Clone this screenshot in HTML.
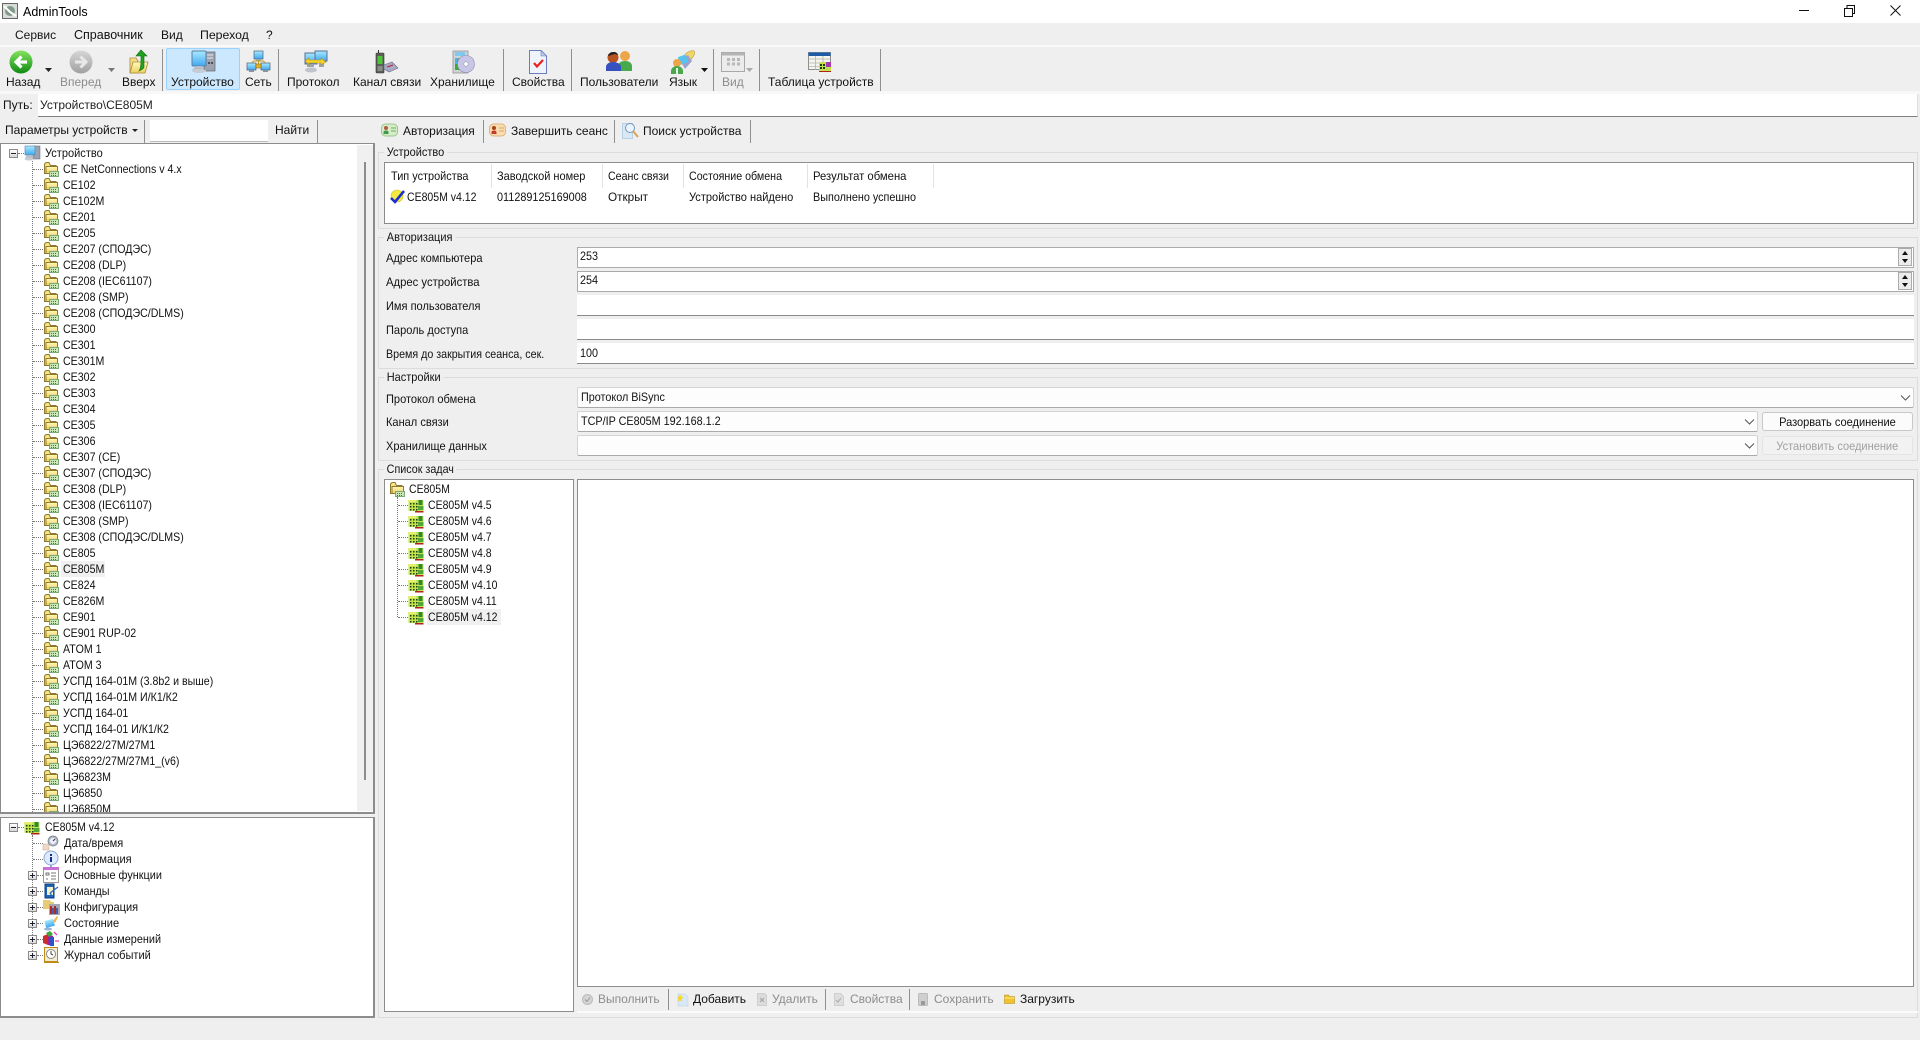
<!DOCTYPE html>
<html lang="ru"><head><meta charset="utf-8"><title>AdminTools</title>
<style>
html,body{margin:0;padding:0;width:1920px;height:1040px;overflow:hidden;background:#efefef}
body{position:relative;font:12px/16px "Liberation Sans","Noto Sans CJK SC",sans-serif;color:#111}
.a{position:absolute}
.t{position:absolute;white-space:nowrap;line-height:16px}
.g{color:#8c8c8c}
.s{position:absolute;width:1px;background:#8f8f8f}
.box{position:absolute;background:#fff;border:1px solid #8c8c8c;box-sizing:border-box}
.gp{position:absolute;box-sizing:border-box;border:1px solid #dcdcdc}
.lg{position:absolute;background:#efefef;padding:0 3px;white-space:nowrap;line-height:16px;transform:scaleX(.915);transform-origin:0 50%}
.n{transform:scaleX(.92);transform-origin:0 50%}
.m{transform:scaleX(.875);transform-origin:0 50%}
.i{display:inline-block;white-space:nowrap;transform:scaleX(.9);transform-origin:0 50%}
.in{position:absolute;background:#fff;box-sizing:border-box;border-bottom:1px solid #8a8a8a;line-height:20px;padding-left:3px}
.in2{position:absolute;background:#fff;box-sizing:border-box;border:1px solid #ababab;line-height:17px;padding-left:1px}
.cb{position:absolute;background:#fdfdfd;box-sizing:border-box;border:1px solid #d4d4d4;border-bottom-color:#aaa;border-radius:2px;line-height:19px;padding-left:3px}
.btn{position:absolute;box-sizing:border-box;border:1px solid #c8c8c8;border-radius:3px;background:#fbfbfb;text-align:center;line-height:18px}
.btn span{display:inline-block;white-space:nowrap;transform:scaleX(.92)}
.r{position:relative;height:16px;line-height:16px;white-space:nowrap}
.r svg{position:absolute;left:43px;top:0;width:16px;height:16px}
.r span{position:absolute;left:63px;top:0;transform:scaleX(.885);transform-origin:0 50%}
.r::before{content:"";position:absolute;left:33px;top:8px;width:10px;border-top:1px dotted #777}
.v{position:absolute;width:0;border-left:1px dotted #777}
.pm{position:absolute;width:9px;height:9px;box-sizing:border-box;border:1px solid #8a8a8a;background:linear-gradient(#fff,#d8d8d8)}
.pm::before{content:"";position:absolute;left:1px;top:3px;width:5px;height:1px;background:#223}
.pm.p::after{content:"";position:absolute;left:3px;top:1px;width:1px;height:5px;background:#223}
.sep{position:absolute;top:164px;height:24px;width:1px;background:#e3e3e3}
.sp{position:absolute;left:1898px;width:14px;height:18px;box-sizing:border-box;border:1px solid #aaa;background:#ececec}
.sp::before{content:"";position:absolute;left:3px;top:2px;border:3px solid transparent;border-top:0;border-bottom:4px solid #111}
.sp::after{content:"";position:absolute;left:3px;bottom:2px;border:3px solid transparent;border-bottom:0;border-top:4px solid #111}
.chev{position:absolute;width:11px;height:6px}
svg{display:block}
.ic{position:absolute;overflow:visible}
</style></head><body>

<svg width="0" height="0" style="position:absolute">
<defs>
<linearGradient id="yl" x1="0" y1="0" x2="0" y2="1"><stop offset="0" stop-color="#fff8c0"/><stop offset="1" stop-color="#f0cf5c"/></linearGradient>
<linearGradient id="gn" x1="0" y1="0" x2="0" y2="1"><stop offset="0" stop-color="#86e45e"/><stop offset="1" stop-color="#0f8a12"/></linearGradient>
<linearGradient id="gr" x1="0" y1="0" x2="0" y2="1"><stop offset="0" stop-color="#d6d6d6"/><stop offset="1" stop-color="#a0a0a0"/></linearGradient>
<linearGradient id="bl" x1="0" y1="0" x2="0" y2="1"><stop offset="0" stop-color="#a8eaff"/><stop offset="1" stop-color="#3fa8f0"/></linearGradient>
<symbol id="f" viewBox="0 0 16 16">
<path d="M1.500 3V12.500H13V4.500H7.500L6 1.500H3z" fill="#f7e38a" stroke="#8f7a2c"/>
<path d="M3 5.500H14.500V12.500H3z" fill="url(#yl)" stroke="#8f7a2c"/>
<rect x="6.500" y="10.500" width="9" height="5" fill="#c8e8b8" stroke="#7fa878"/>
<path d="M8 12h1v1H8zM10 12h1v1h-1zM12 12h1v1h-1zM8 14h1v1H8zM10 14h1v1h-1zM12 14h1v1h-1z" fill="#3b7a3a"/>
</symbol>
<symbol id="c" viewBox="0 0 16 16">
<rect x="0.500" y="3" width="15" height="11" fill="#c4e44e"/>
<path d="M0 3h8v2H0z" fill="#e6ee70"/>
<path d="M2 6h1.500v1.500H2zM5 6h1.500v1.500H5zM2 9h1.500v1.500H2zM5 9h1.500v1.500H5zM2 12h1.500v1.500H2zM5 12h1.500v1.500H5zM8 6h1.500v1.500H8zM8 9h1.500v1.500H8zM8 12h1.500v1.500H8z" fill="#1b3d12"/>
<path d="M10.500 3h4v5h-4z" fill="#2e8a2e"/><path d="M10 9h5.500v4H10z" fill="#4fa838"/>
<path d="M7 14h8.500v1.500H7z" fill="#b42020"/>
</symbol>
</defs></svg>

<!-- Title bar -->
<div class="a" style="left:0;top:0;width:1920px;height:23px;background:#fff"></div>
<svg class="ic" style="left:2px;top:3px" width="16" height="16" viewBox="0 0 16 16"><rect x=".5" y=".5" width="15" height="15" fill="#d8dcd8" stroke="#666"/><circle cx="8" cy="8" r="5" fill="#7f9a88"/><path d="M2 3l6 6 6 4" stroke="#fff" stroke-width="2" fill="none"/></svg>
<div class="t" style="left:23px;top:4px;font-size:12.5px;color:#000">AdminTools</div>
<svg class="ic" style="left:1799px;top:5px" width="12" height="12"><path d="M0 5.500H10" stroke="#111"/></svg>
<svg class="ic" style="left:1844px;top:5px" width="12" height="12"><path d="M.5 3.500H8.500V11.500H.5zM3 3V.5H10.500V8.500H9" stroke="#111" fill="none"/></svg>
<svg class="ic" style="left:1890px;top:5px" width="12" height="12"><path d="M.5.5L10.500 10.500M10.500.5L.5 10.500" stroke="#111" fill="none"/></svg>

<!-- Menu -->
<div class="a" style="left:0;top:23px;width:1920px;height:22px;background:#efefef"></div>
<div class="t" style="left:15px;top:27px">Сервис</div>
<div class="t" style="left:74px;top:27px;font-size:12.500px">Справочник</div>
<div class="t" style="left:161px;top:27px">Вид</div>
<div class="t" style="left:200px;top:27px;font-size:12.300px">Переход</div>
<div class="t" style="left:266px;top:27px">?</div>

<!-- Toolbar -->
<div class="a" style="left:0;top:45px;width:1920px;height:2px;background:#fafafa"></div>
<div class="a" style="left:0;top:91px;width:1920px;height:3px;background:#f8f8f8"></div>
<div class="s" style="left:162px;top:49px;height:42px"></div>
<div class="s" style="left:278px;top:49px;height:42px"></div>
<div class="s" style="left:503px;top:49px;height:42px"></div>
<div class="s" style="left:571px;top:49px;height:42px"></div>
<div class="s" style="left:713px;top:49px;height:42px"></div>
<div class="s" style="left:759px;top:49px;height:42px"></div>
<div class="s" style="left:880px;top:49px;height:42px"></div>
<div class="a" style="left:166px;top:48px;width:74px;height:42px;box-sizing:border-box;background:#cce8ff;border:1px solid #99d1ff;border-radius:2px"></div>

<svg class="ic" style="left:9px;top:50px" width="24" height="24" viewBox="0 0 24 24"><circle cx="12" cy="12" r="11.500" fill="url(#gn)"/><path d="M12.500 6.500L7 12l5.500 5.500M7.500 12H18" stroke="#fff" stroke-width="3.200" fill="none"/></svg>
<svg class="ic" style="left:69px;top:50px" width="24" height="24" viewBox="0 0 24 24"><circle cx="12" cy="12" r="11.500" fill="url(#gr)"/><path d="M11.500 6.500L17 12l-5.500 5.500M16.500 12H6" stroke="#e8e8e8" stroke-width="3" fill="none"/></svg>
<svg class="ic" style="left:129px;top:50px" width="20" height="24" viewBox="0 0 20 24"><path d="M1 8h6l2 3v12H1z" fill="#f2dc88" stroke="#a78c3a" stroke-width=".8"/><path d="M4 12h15l-3 11H1z" fill="url(#yl)" stroke="#a78c3a" stroke-width=".8"/><path d="M12 0l6 6h-3v11c0 2-3 3-5 4 2-3 2-8 2-15H7z" fill="#22a022" stroke="#0d6f12" stroke-width=".6"/></svg>
<svg class="ic" style="left:191px;top:50px" width="25" height="24" viewBox="0 0 25 24"><rect x="13" y="2" width="11" height="19" fill="#9da3ae" stroke="#5f6470" stroke-width=".7"/><path d="M16 5h6M16 8h6" stroke="#e5e7ec"/><path d="M17 12h2v2h-2zM20 12h2v2h-2z" fill="#4a4f5c"/><rect x="1" y="1" width="14" height="15" rx="1" fill="url(#bl)" stroke="#5b7fa6"/><path d="M5 16h6l2 4H1z" fill="#b7bdc7"/><ellipse cx="8" cy="21" rx="7" ry="2" fill="#c7cbd3"/></svg>
<svg class="ic" style="left:246px;top:50px" width="25" height="24" viewBox="0 0 25 24"><rect x="8" y="1" width="9" height="8" fill="url(#bl)" stroke="#4e5f78" stroke-width=".7"/><rect x="10" y="9" width="5" height="2" fill="#9aa"/><rect x="1" y="13" width="9" height="7" fill="url(#bl)" stroke="#4e5f78" stroke-width=".7"/><rect x="15" y="13" width="9" height="7" fill="url(#bl)" stroke="#4e5f78" stroke-width=".7"/><path d="M3 21h5M17 21h5" stroke="#8b93a0" stroke-width="2"/><path d="M12.500 11v4M5 13l3-2h9l3 2" stroke="#c79a18" fill="none"/><rect x="10" y="14" width="5" height="4" fill="#e2b32c" stroke="#7a5f12" stroke-width=".5"/></svg>
<svg class="ic" style="left:304px;top:50px" width="24" height="24" viewBox="0 0 24 24"><rect x="1" y="3" width="12" height="11" fill="url(#bl)" stroke="#5b6f96"/><rect x="11" y="1" width="12" height="10" fill="url(#bl)" stroke="#5b6f96"/><path d="M3 14h7v3H3z" fill="#9aa4b2"/><ellipse cx="7" cy="20" rx="6" ry="2.500" fill="#bfc4cc"/><rect x="15" y="11" width="5" height="6" fill="#9aa4b2"/><path d="M1 11l4-3v2h12V8l5 4-5 3v-2H5v2z" fill="#f5d22a" stroke="#b48e10" stroke-width=".6"/></svg>
<svg class="ic" style="left:374px;top:50px" width="24" height="24" viewBox="0 0 24 24"><rect x="2" y="3" width="8" height="20" rx="1" fill="#5b5f58" stroke="#333" stroke-width=".6"/><rect x="3.500" y="6" width="5" height="8" fill="#4fc43a"/><path d="M4 0h1v3H4z" fill="#333"/><path d="M3.500 16h5v5h-5z" fill="#8a8d88"/><path d="M10 15l8-3 6 6-9 4-5-3z" fill="#a8abc4" stroke="#656884" stroke-width=".6"/><path d="M13 17l6-2" stroke="#b42030"/></svg>
<svg class="ic" style="left:452px;top:50px" width="23" height="24" viewBox="0 0 23 24"><rect x="1" y="1" width="15" height="22" fill="#cfd3d6" stroke="#85898c" stroke-width=".7"/><rect x="3" y="2" width="10" height="4" fill="#7fc8f0"/><path d="M3 8h5v6H3z" fill="#49b5e6"/><path d="M3 14h5v6H3z" fill="#3fa83a"/><path d="M5 9h3v4H5z" fill="#e56b2a"/><circle cx="14" cy="14" r="8.500" fill="#c8c6e6" stroke="#8f8fb0" stroke-width=".6"/><circle cx="14" cy="14" r="2.200" fill="#fff" stroke="#888" stroke-width=".5"/></svg>
<svg class="ic" style="left:529px;top:50px" width="18" height="24" viewBox="0 0 18 24"><path d="M.5.5H12l5.500 5.500V23.500H.5z" fill="#eef3fc" stroke="#6a7dbc"/><path d="M12 .5V6h5.500z" fill="#b9c8ec" stroke="#6a7dbc" stroke-width=".6"/><path d="M5 13l3 3.500 6-6.500" stroke="#e52420" stroke-width="2.200" fill="none"/></svg>
<svg class="ic" style="left:606px;top:50px" width="26" height="22" viewBox="0 0 26 22"><circle cx="19" cy="6" r="5" fill="#eca548"/><path d="M12 21v-5c0-3 3-5 7-5s7 2 7 5v5z" fill="#47a84c"/><circle cx="7" cy="7.500" r="5.500" fill="#b8521f"/><path d="M2 6c0-4 9-6 10-1l-3-1z" fill="#222"/><path d="M0 21v-4c0-3 3-5 7-5s8 2 8 5v4z" fill="#3752c0"/></svg>
<svg class="ic" style="left:671px;top:49px" width="25" height="25" viewBox="0 0 25 25"><path d="M13 7c2-4 8-6 10-5 2 2-1 7-4 9z" fill="#f2d56a" stroke="#b99b36" stroke-width=".6"/><path d="M8 10l9-4 4 6-7 8z" fill="#9aa3ce"/><rect x="8" y="7" width="8" height="8" fill="#55c4ee" transform="rotate(-20 11 11)"/><circle cx="6" cy="14" r="4" fill="#eda64a"/><path d="M0 25v-3c0-3 3-5 6-5s6 2 6 5v3z" fill="#4aa84c"/><path d="M5 19h2v6H5z" fill="#e6f2e6"/></svg>
<svg class="ic" style="left:721px;top:52px" width="24" height="20" viewBox="0 0 24 20"><rect x=".5" y=".5" width="23" height="19" fill="#ececec" stroke="#a8a8a8"/><rect x=".5" y=".5" width="23" height="3" fill="#b4b4b4"/><path d="M6 6h3v3H6zM11 6h3v3h-3zM16 6h3v3h-3zM6 10.500h3v3H6zM11 10.500h3v3h-3zM16 10.500h3v3h-3z" fill="#b8b8b8"/></svg>
<svg class="ic" style="left:808px;top:52px" width="24" height="22" viewBox="0 0 24 22"><rect x=".5" y=".5" width="22" height="17" fill="#f4f4f0" stroke="#8c8c8c"/><rect x=".5" y=".5" width="22" height="3.500" fill="#1f5aa6"/><path d="M.5 7H22M.5 11H22M.5 14.500H22M7.500 4v14M15 4v14" stroke="#b4b4a8" stroke-width=".8"/><rect x="11" y="10" width="12" height="10" fill="#c4e44e"/><path d="M12 12h2v2h-2zM15 12h2v2h-2zM12 15h2v2h-2zM15 15h2v2h-2z" fill="#1b3d12"/><path d="M18 10h5v5h-5z" fill="#a83ab0"/><path d="M11 19.500h12" stroke="#b42020"/></svg>

<svg class="ic" style="left:45px;top:68px" width="8" height="5"><path d="M0 0h7L3.500 4z" fill="#222"/></svg>
<svg class="ic" style="left:108px;top:68px" width="8" height="5"><path d="M0 0h7L3.500 4z" fill="#777"/></svg>
<svg class="ic" style="left:701px;top:68px" width="8" height="5"><path d="M0 0h7L3.500 4z" fill="#111"/></svg>
<svg class="ic" style="left:746px;top:68px" width="8" height="5"><path d="M0 0h7L3.500 4z" fill="#aaa"/></svg>

<div class="t" style="left:6px;top:74px">Назад</div>
<div class="t g" style="left:60px;top:74px">Вперед</div>
<div class="t" style="left:122px;top:74px">Вверх</div>
<div class="t" style="left:171px;top:74px">Устройство</div>
<div class="t" style="left:245px;top:74px">Сеть</div>
<div class="t" style="left:287px;top:74px">Протокол</div>
<div class="t" style="left:353px;top:74px">Канал связи</div>
<div class="t" style="left:430px;top:74px">Хранилище</div>
<div class="t" style="left:512px;top:74px">Свойства</div>
<div class="t" style="left:580px;top:74px">Пользователи</div>
<div class="t" style="left:669px;top:74px">Язык</div>
<div class="t g" style="left:722px;top:74px">Вид</div>
<div class="t" style="left:768px;top:74px">Таблица устройств</div>

<!-- Path -->
<div class="t" style="left:3px;top:97px">Путь:</div>
<div class="a" style="left:38px;top:94px;width:1880px;height:23px;box-sizing:border-box;background:#fff;border-bottom:1px solid #808080;border-right:1px solid #ddd"></div>
<div class="t" style="left:40px;top:97px;color:#222">Устройство\CE805M</div>

<!-- Search row -->
<div class="t" style="left:5px;top:122px">Параметры устройств</div>
<svg class="ic" style="left:132px;top:129px" width="7" height="4"><path d="M0 0h6L3 3z" fill="#222"/></svg>
<div class="s" style="left:144px;top:120px;height:23px"></div>
<div class="a" style="left:150px;top:120px;width:118px;height:21px;background:#fff;border-bottom:1px solid #bbb"></div>
<div class="t" style="left:275px;top:122px">Найти</div>
<div class="s" style="left:317px;top:120px;height:23px"></div>
<svg class="ic" style="left:381px;top:122px" width="17" height="16" viewBox="0 0 17 16"><rect x=".5" y="2" width="16" height="12" rx="4" fill="#d6ecc6" stroke="#9cc58e"/><circle cx="5" cy="6" r="2" fill="#b45a3a"/><path d="M2.500 12V10c0-1 1-1.500 2.500-1.500S7.500 9 7.500 10v2z" fill="#3d9a4a"/><path d="M10 6h5M10 9h5" stroke="#68b25c"/></svg>
<div class="t" style="left:403px;top:123px">Авторизация</div>
<div class="s" style="left:483px;top:120px;height:23px"></div>
<svg class="ic" style="left:489px;top:122px" width="17" height="16" viewBox="0 0 17 16"><rect x=".5" y="2" width="16" height="12" rx="4" fill="#f8ddb0" stroke="#e0b27c"/><circle cx="5" cy="6" r="2" fill="#a8421e"/><path d="M2.500 12V10c0-1 1-1.500 2.500-1.500S7.500 9 7.500 10v2z" fill="#c83a2a"/><path d="M10 6h5M10 9h5" stroke="#e0a868"/></svg>
<div class="t" style="left:511px;top:123px">Завершить сеанс</div>
<div class="s" style="left:614px;top:120px;height:23px"></div>
<svg class="ic" style="left:622px;top:122px" width="17" height="17" viewBox="0 0 17 17"><path d="M.5 1.500h10v15H.5z" fill="#d8e8f6" stroke="#b8cee2"/><circle cx="8" cy="6" r="4.500" fill="#eaf4ff" stroke="#7a94b8"/><path d="M11 9l5 6" stroke="#d6a458" stroke-width="2"/></svg>
<div class="t" style="left:643px;top:123px">Поиск устройства</div>
<div class="s" style="left:750px;top:120px;height:23px"></div>

<!-- Device tree -->
<div class="box" style="left:0;top:143px;width:375px;height:671px;overflow:hidden;border-width:1px 2px 2px 1px"></div>
<div class="a" style="left:357px;top:145px;width:16px;height:666px;background:#f0f0f0"></div>
<div class="a" style="left:364px;top:162px;width:2px;height:618px;background:#8c8c8c"></div>
<div class="pm" style="left:9px;top:149px"></div>
<div class="a" style="left:18px;top:153px;width:6px;border-top:1px dotted #777"></div>
<svg class="ic" style="left:24px;top:145px" width="16" height="16" viewBox="0 0 16 16"><rect x="9" y="1" width="7" height="13" fill="#9da3ae" stroke="#5f6470" stroke-width=".5"/><rect x="1" y="1" width="10" height="9" fill="url(#bl)" stroke="#5b7fa6" stroke-width=".6"/><path d="M3 10h5l1 3H1z" fill="#b7bdc7"/><ellipse cx="5" cy="14" rx="4.500" ry="1.500" fill="#c7cbd3"/></svg>
<div class="t n" style="left:45px;top:145px">Устройство</div>
<div class="v" style="left:32px;top:161px;height:651px"></div>
<div class="a" style="left:0;top:161px;width:357px;height:651px;overflow:hidden">
<div class="r"><svg><use href="#f"/></svg><span>CE NetConnections v 4.x</span></div>
<div class="r"><svg><use href="#f"/></svg><span>CE102</span></div>
<div class="r"><svg><use href="#f"/></svg><span>CE102M</span></div>
<div class="r"><svg><use href="#f"/></svg><span>CE201</span></div>
<div class="r"><svg><use href="#f"/></svg><span>CE205</span></div>
<div class="r"><svg><use href="#f"/></svg><span>CE207 (СПОДЭС)</span></div>
<div class="r"><svg><use href="#f"/></svg><span>CE208 (DLP)</span></div>
<div class="r"><svg><use href="#f"/></svg><span>CE208 (IEC61107)</span></div>
<div class="r"><svg><use href="#f"/></svg><span>CE208 (SMP)</span></div>
<div class="r"><svg><use href="#f"/></svg><span>CE208 (СПОДЭС/DLMS)</span></div>
<div class="r"><svg><use href="#f"/></svg><span>CE300</span></div>
<div class="r"><svg><use href="#f"/></svg><span>CE301</span></div>
<div class="r"><svg><use href="#f"/></svg><span>CE301M</span></div>
<div class="r"><svg><use href="#f"/></svg><span>CE302</span></div>
<div class="r"><svg><use href="#f"/></svg><span>CE303</span></div>
<div class="r"><svg><use href="#f"/></svg><span>CE304</span></div>
<div class="r"><svg><use href="#f"/></svg><span>CE305</span></div>
<div class="r"><svg><use href="#f"/></svg><span>CE306</span></div>
<div class="r"><svg><use href="#f"/></svg><span>CE307 (CE)</span></div>
<div class="r"><svg><use href="#f"/></svg><span>CE307 (СПОДЭС)</span></div>
<div class="r"><svg><use href="#f"/></svg><span>CE308 (DLP)</span></div>
<div class="r"><svg><use href="#f"/></svg><span>CE308 (IEC61107)</span></div>
<div class="r"><svg><use href="#f"/></svg><span>CE308 (SMP)</span></div>
<div class="r"><svg><use href="#f"/></svg><span>CE308 (СПОДЭС/DLMS)</span></div>
<div class="r"><svg><use href="#f"/></svg><span>CE805</span></div>
<div class="r"><div class="a" style="left:61px;top:0;width:44px;height:16px;background:#f0f0f0"></div><svg><use href="#f"/></svg><span>CE805M</span></div>
<div class="r"><svg><use href="#f"/></svg><span>CE824</span></div>
<div class="r"><svg><use href="#f"/></svg><span>CE826M</span></div>
<div class="r"><svg><use href="#f"/></svg><span>CE901</span></div>
<div class="r"><svg><use href="#f"/></svg><span>CE901 RUP-02</span></div>
<div class="r"><svg><use href="#f"/></svg><span>ATOM 1</span></div>
<div class="r"><svg><use href="#f"/></svg><span>ATOM 3</span></div>
<div class="r"><svg><use href="#f"/></svg><span>УСПД 164-01М (3.8b2 и выше)</span></div>
<div class="r"><svg><use href="#f"/></svg><span>УСПД 164-01М И/К1/К2</span></div>
<div class="r"><svg><use href="#f"/></svg><span>УСПД 164-01</span></div>
<div class="r"><svg><use href="#f"/></svg><span>УСПД 164-01 И/К1/К2</span></div>
<div class="r"><svg><use href="#f"/></svg><span>ЦЭ6822/27М/27М1</span></div>
<div class="r"><svg><use href="#f"/></svg><span>ЦЭ6822/27М/27М1_(v6)</span></div>
<div class="r"><svg><use href="#f"/></svg><span>ЦЭ6823М</span></div>
<div class="r"><svg><use href="#f"/></svg><span>ЦЭ6850</span></div>
<div class="r"><svg><use href="#f"/></svg><span>ЦЭ6850М</span></div>
</div>

<!-- Params tree -->
<div class="box" style="left:0;top:817px;width:375px;height:201px;border-width:1px 2px 2px 1px"></div>
<div class="pm" style="left:9px;top:823px"></div>
<div class="a" style="left:18px;top:827px;width:6px;border-top:1px dotted #777"></div>
<svg class="ic" style="left:24px;top:819px;width:16px;height:16px"><use href="#c"/></svg>
<div class="t m" style="left:45px;top:819px">CE805M v4.12</div>
<div class="v" style="left:32px;top:835px;height:120px"></div>
<div class="a" style="left:33px;top:843px;width:10px;border-top:1px dotted #777"></div>
<div class="a" style="left:33px;top:859px;width:10px;border-top:1px dotted #777"></div>
<div class="a" style="left:37px;top:875px;width:6px;border-top:1px dotted #777"></div>
<div class="a" style="left:37px;top:891px;width:6px;border-top:1px dotted #777"></div>
<div class="a" style="left:37px;top:907px;width:6px;border-top:1px dotted #777"></div>
<div class="a" style="left:37px;top:923px;width:6px;border-top:1px dotted #777"></div>
<div class="a" style="left:37px;top:939px;width:6px;border-top:1px dotted #777"></div>
<div class="a" style="left:37px;top:955px;width:6px;border-top:1px dotted #777"></div>
<div class="pm p" style="left:28px;top:871px"></div>
<div class="pm p" style="left:28px;top:887px"></div>
<div class="pm p" style="left:28px;top:903px"></div>
<div class="pm p" style="left:28px;top:919px"></div>
<div class="pm p" style="left:28px;top:935px"></div>
<div class="pm p" style="left:28px;top:951px"></div>
<svg class="ic" style="left:43px;top:835px" width="17" height="16" viewBox="0 0 17 16"><rect x="0" y="9" width="6" height="6" fill="#f0d8c8" stroke="#c9a894" stroke-width=".5"/><circle cx="10" cy="6" r="5" fill="#b4bcc8" stroke="#6b7484" stroke-width=".7"/><circle cx="10" cy="6" r="3" fill="#eef"/><path d="M10 6l2-2" stroke="#333"/></svg>
<svg class="ic" style="left:43px;top:851px" width="16" height="16" viewBox="0 0 16 16"><circle cx="8" cy="7" r="7" fill="#dfeafc" stroke="#8ea8d4"/><rect x="7" y="6" width="2" height="5" fill="#10308c"/><rect x="7" y="3" width="2" height="2" fill="#10308c"/><path d="M7 14h2v2H7z" fill="#8ea8d4"/></svg>
<svg class="ic" style="left:43px;top:867px" width="16" height="16" viewBox="0 0 16 16"><rect x=".5" y=".5" width="15" height="15" fill="#fff" stroke="#999"/><rect x="0" y="0" width="16" height="3" fill="#c870d8"/><path d="M3 6h3v2H3zM8 6h5M8 9h5M3 12h2M8 12h5" stroke="#777" fill="none"/></svg>
<svg class="ic" style="left:44px;top:883px" width="16" height="16" viewBox="0 0 16 16"><rect x="1" y="1" width="9" height="14" fill="#1f63b4" stroke="#0e3c7c"/><rect x="3" y="4" width="6" height="8" fill="#f4f0c8"/><path d="M6 10l8-6M6 10l2 3" stroke="#2a6cc0" stroke-width="1.300" fill="none"/></svg>
<svg class="ic" style="left:43px;top:899px" width="17" height="16" viewBox="0 0 17 16"><path d="M0 1h7l1 2h3v7H0z" fill="#e8cb76"/><rect x="6" y="5" width="11" height="11" fill="#a4a8b4"/><path d="M8 7v8M12 7v8" stroke="#b02a2a" stroke-width="2"/><path d="M10 9v6M14 9v6" stroke="#2a44a0" stroke-width="1.500"/></svg>
<svg class="ic" style="left:43px;top:915px" width="16" height="16" viewBox="0 0 16 16"><path d="M10 6l4-5 1 1-3 6z" fill="#eab94a"/><rect x="2" y="5" width="9" height="7" fill="url(#bl)" transform="rotate(-15 6 8)"/><ellipse cx="5" cy="14" rx="4" ry="1.500" fill="#98b4d4"/></svg>
<svg class="ic" style="left:43px;top:931px" width="16" height="16" viewBox="0 0 16 16"><path d="M0 5l5-2v11l-5-2z" fill="#d02b2b"/><path d="M5 3l5 2v10l-5-1z" fill="#a32094"/><path d="M3 2l4-2 3 3-4 3z" fill="#3aa83a"/><path d="M7 6h4v9H7z" fill="#2a54c8"/><path d="M11 1l3 3M12 10h4" stroke="#e838c8" stroke-width="1.300"/></svg>
<svg class="ic" style="left:44px;top:947px" width="16" height="16" viewBox="0 0 16 16"><rect x=".5" y=".5" width="13" height="14" fill="#f4eed0" stroke="#c08a18"/><path d="M.5.5V15.500H15" stroke="#c08a18" fill="none"/><circle cx="7" cy="7" r="4.500" fill="#fff" stroke="#888"/><path d="M7 4v3l2 1" stroke="#444" fill="none"/></svg>
<div class="t n" style="left:64px;top:835px">Дата/время</div>
<div class="t n" style="left:64px;top:851px">Информация</div>
<div class="t" style="left:64px;top:867px;transform:scaleX(.905);transform-origin:0 50%">Основные функции</div>
<div class="t" style="left:64px;top:883px;transform:scaleX(.895);transform-origin:0 50%">Команды</div>
<div class="t n" style="left:64px;top:899px">Конфигурация</div>
<div class="t n" style="left:64px;top:915px">Состояние</div>
<div class="t" style="left:64px;top:931px;transform:scaleX(.905);transform-origin:0 50%">Данные измерений</div>
<div class="t n" style="left:64px;top:947px">Журнал событий</div>

<!-- Group: Устройство -->
<div class="gp" style="left:378px;top:152px;width:1540px;height:77px"></div>
<div class="lg" style="left:384px;top:144px">Устройство</div>
<div class="box" style="left:384px;top:162px;width:1530px;height:62px"></div>
<div class="sep" style="left:491px"></div><div class="sep" style="left:602px"></div><div class="sep" style="left:683px"></div><div class="sep" style="left:807px"></div><div class="sep" style="left:933px"></div>
<div class="t" style="left:391px;top:168px;transform:scaleX(.91);transform-origin:0 50%">Тип устройства</div>
<div class="t" style="left:497px;top:168px;transform:scaleX(.915);transform-origin:0 50%">Заводской номер</div>
<div class="t" style="left:608px;top:168px;transform:scaleX(.885);transform-origin:0 50%">Сеанс связи</div>
<div class="t" style="left:689px;top:168px;transform:scaleX(.888);transform-origin:0 50%">Состояние обмена</div>
<div class="t" style="left:813px;top:168px;transform:scaleX(.94);transform-origin:0 50%">Результат обмена</div>
<svg class="ic" style="left:390px;top:189px" width="15" height="15" viewBox="0 0 15 15"><circle cx="7" cy="7" r="6" fill="#f2ea40" stroke="#cfc020" stroke-width=".6"/><path d="M1 9l4 4L14 2" stroke="#1a2fd0" stroke-width="2.600" fill="none"/></svg>
<div class="t m" style="left:407px;top:189px">CE805M v4.12</div>
<div class="t" style="left:497px;top:189px;transform:scaleX(.905);transform-origin:0 50%">011289125169008</div>
<div class="t" style="left:608px;top:189px;transform:scaleX(.98);transform-origin:0 50%">Открыт</div>
<div class="t" style="left:689px;top:189px;transform:scaleX(.922);transform-origin:0 50%">Устройство найдено</div>
<div class="t" style="left:813px;top:189px;transform:scaleX(.9);transform-origin:0 50%">Выполнено успешно</div>

<!-- Group: Авторизация -->
<div class="gp" style="left:378px;top:237px;width:1540px;height:132px"></div>
<div class="lg" style="left:384px;top:229px">Авторизация</div>
<div class="t n" style="left:386px;top:250px">Адрес компьютера</div>
<div class="t" style="left:386px;top:274px;transform:scaleX(.94);transform-origin:0 50%">Адрес устройства</div>
<div class="t n" style="left:386px;top:298px">Имя пользователя</div>
<div class="t n" style="left:386px;top:322px">Пароль доступа</div>
<div class="t" style="left:386px;top:346px;transform:scaleX(.89);transform-origin:0 50%">Время до закрытия сеанса, сек.</div>
<div class="in2" style="left:577px;top:247px;width:1337px;height:21px;padding-left:2px"><span class="i">253</span></div>
<div class="in2" style="left:577px;top:271px;width:1337px;height:21px;padding-left:2px"><span class="i">254</span></div>
<div class="sp" style="top:248px"></div>
<div class="sp" style="top:272px"></div>
<div class="in" style="left:577px;top:295px;width:1337px;height:21px"></div>
<div class="in" style="left:577px;top:319px;width:1337px;height:21px"></div>
<div class="in" style="left:577px;top:343px;width:1337px;height:21px"><span class="i">100</span></div>

<!-- Group: Настройки -->
<div class="gp" style="left:378px;top:377px;width:1540px;height:84px"></div>
<div class="lg" style="left:384px;top:369px">Настройки</div>
<div class="t n" style="left:386px;top:391px">Протокол обмена</div>
<div class="t n" style="left:386px;top:414px">Канал связи</div>
<div class="t n" style="left:386px;top:438px">Хранилище данных</div>
<div class="cb" style="left:577px;top:387px;width:1337px;height:21px"><span class="i">Протокол BiSync</span></div>
<div class="cb" style="left:577px;top:411px;width:1181px;height:21px"><span class="i">TCP/IP CE805M 192.168.1.2</span></div>
<div class="cb" style="left:577px;top:435px;width:1181px;height:21px"></div>
<svg class="chev" style="left:1900px;top:395px"><path d="M1 .5l4.500 4.500L10 .5" stroke="#555" fill="none"/></svg>
<svg class="chev" style="left:1744px;top:419px"><path d="M1 .5l4.500 4.500L10 .5" stroke="#555" fill="none"/></svg>
<svg class="chev" style="left:1744px;top:443px"><path d="M1 .5l4.500 4.500L10 .5" stroke="#555" fill="none"/></svg>
<div class="btn" style="left:1762px;top:412px;width:151px;height:19px"><span>Разорвать соединение</span></div>
<div class="btn" style="left:1762px;top:436px;width:151px;height:19px;background:#f2f2f2;border-color:#e4e4e4;color:#a0a0a0"><span>Установить соединение</span></div>

<!-- Group: Список задач -->
<div class="gp" style="left:378px;top:469px;width:1540px;height:549px"></div>
<div class="lg" style="left:384px;top:461px;transform:scaleX(.895)">Список задач</div>
<div class="box" style="left:384px;top:479px;width:190px;height:533px"></div>
<svg class="ic" style="left:389px;top:481px;width:16px;height:16px"><use href="#f"/></svg>
<div class="t m" style="left:409px;top:481px">CE805M</div>
<div class="v" style="left:397px;top:497px;height:120px"></div>
<div class="a" style="left:398px;top:505px;width:10px;border-top:1px dotted #777"></div>
<div class="a" style="left:398px;top:521px;width:10px;border-top:1px dotted #777"></div>
<div class="a" style="left:398px;top:537px;width:10px;border-top:1px dotted #777"></div>
<div class="a" style="left:398px;top:553px;width:10px;border-top:1px dotted #777"></div>
<div class="a" style="left:398px;top:569px;width:10px;border-top:1px dotted #777"></div>
<div class="a" style="left:398px;top:585px;width:10px;border-top:1px dotted #777"></div>
<div class="a" style="left:398px;top:601px;width:10px;border-top:1px dotted #777"></div>
<div class="a" style="left:398px;top:617px;width:10px;border-top:1px dotted #777"></div>
<div class="a" style="left:427px;top:609px;width:74px;height:16px;background:#f0f0f0"></div>
<svg class="ic" style="left:408px;top:497px;width:16px;height:16px"><use href="#c"/></svg>
<svg class="ic" style="left:408px;top:513px;width:16px;height:16px"><use href="#c"/></svg>
<svg class="ic" style="left:408px;top:529px;width:16px;height:16px"><use href="#c"/></svg>
<svg class="ic" style="left:408px;top:545px;width:16px;height:16px"><use href="#c"/></svg>
<svg class="ic" style="left:408px;top:561px;width:16px;height:16px"><use href="#c"/></svg>
<svg class="ic" style="left:408px;top:577px;width:16px;height:16px"><use href="#c"/></svg>
<svg class="ic" style="left:408px;top:593px;width:16px;height:16px"><use href="#c"/></svg>
<svg class="ic" style="left:408px;top:609px;width:16px;height:16px"><use href="#c"/></svg>
<div class="t m" style="left:428px;top:497px">CE805M v4.5</div>
<div class="t m" style="left:428px;top:513px">CE805M v4.6</div>
<div class="t m" style="left:428px;top:529px">CE805M v4.7</div>
<div class="t m" style="left:428px;top:545px">CE805M v4.8</div>
<div class="t m" style="left:428px;top:561px">CE805M v4.9</div>
<div class="t m" style="left:428px;top:577px">CE805M v4.10</div>
<div class="t m" style="left:428px;top:593px">CE805M v4.11</div>
<div class="t m" style="left:428px;top:609px">CE805M v4.12</div>

<div class="box" style="left:577px;top:479px;width:1337px;height:508px"></div>

<!-- Bottom task toolbar -->
<div class="a" style="left:577px;top:1011px;width:1341px;height:2px;background:#fafafa"></div>
<div class="s" style="left:668px;top:989px;height:21px"></div>
<div class="s" style="left:825px;top:989px;height:21px"></div>
<div class="s" style="left:909px;top:989px;height:21px"></div>
<svg class="ic" style="left:582px;top:994px" width="11" height="11" viewBox="0 0 11 11"><circle cx="5.500" cy="5.500" r="5" fill="#d4d4d4" stroke="#bbb"/><path d="M3 5.500l2 2 3-4" stroke="#999" fill="none"/></svg>
<div class="t g" style="left:598px;top:991px">Выполнить</div>
<svg class="ic" style="left:677px;top:993px" width="11" height="13" viewBox="0 0 11 13"><path d="M1 1h7l3 3v9H1z" fill="#d8e8f6" stroke="#b8cce0" stroke-width=".5"/><path d="M3 1l1 2.500 2.500.5L4.500 6l.5 2.500L3 7.200 1 8.500 1.500 6 0 4l2-.5z" fill="#f6d81e"/></svg>
<div class="t" style="left:693px;top:991px">Добавить</div>
<svg class="ic" style="left:757px;top:993px" width="10" height="13" viewBox="0 0 10 13"><path d="M.5.500h7l2 2v10H.5z" fill="#dcdcdc" stroke="#cfcfcf"/><path d="M3 5l4 4M7 5l-4 4" stroke="#a4a4a4"/></svg>
<div class="t g" style="left:772px;top:991px">Удалить</div>
<svg class="ic" style="left:834px;top:993px" width="10" height="13" viewBox="0 0 10 13"><path d="M.5.500h6l3 3v9H.5z" fill="#dedede" stroke="#cfcfcf"/><path d="M2 7l2 2 3-4" stroke="#a8a8a8" fill="none"/></svg>
<div class="t g" style="left:850px;top:991px">Свойства</div>
<svg class="ic" style="left:918px;top:993px" width="10" height="13" viewBox="0 0 10 13"><rect x=".5" y=".5" width="9" height="12" rx="1" fill="#cfcfcf" stroke="#bbb"/><rect x="3" y="8" width="4" height="4" fill="#999"/></svg>
<div class="t g" style="left:934px;top:991px">Сохранить</div>
<svg class="ic" style="left:1004px;top:994px" width="11" height="10" viewBox="0 0 11 10"><path d="M.5 2.500V1h4l1 1.500h5v7H.5z" fill="#f0c22c" stroke="#b48d14" stroke-width=".6"/><path d="M.5 4h10" stroke="#fbe98a"/></svg>
<div class="t" style="left:1020px;top:991px">Загрузить</div>

</body></html>
